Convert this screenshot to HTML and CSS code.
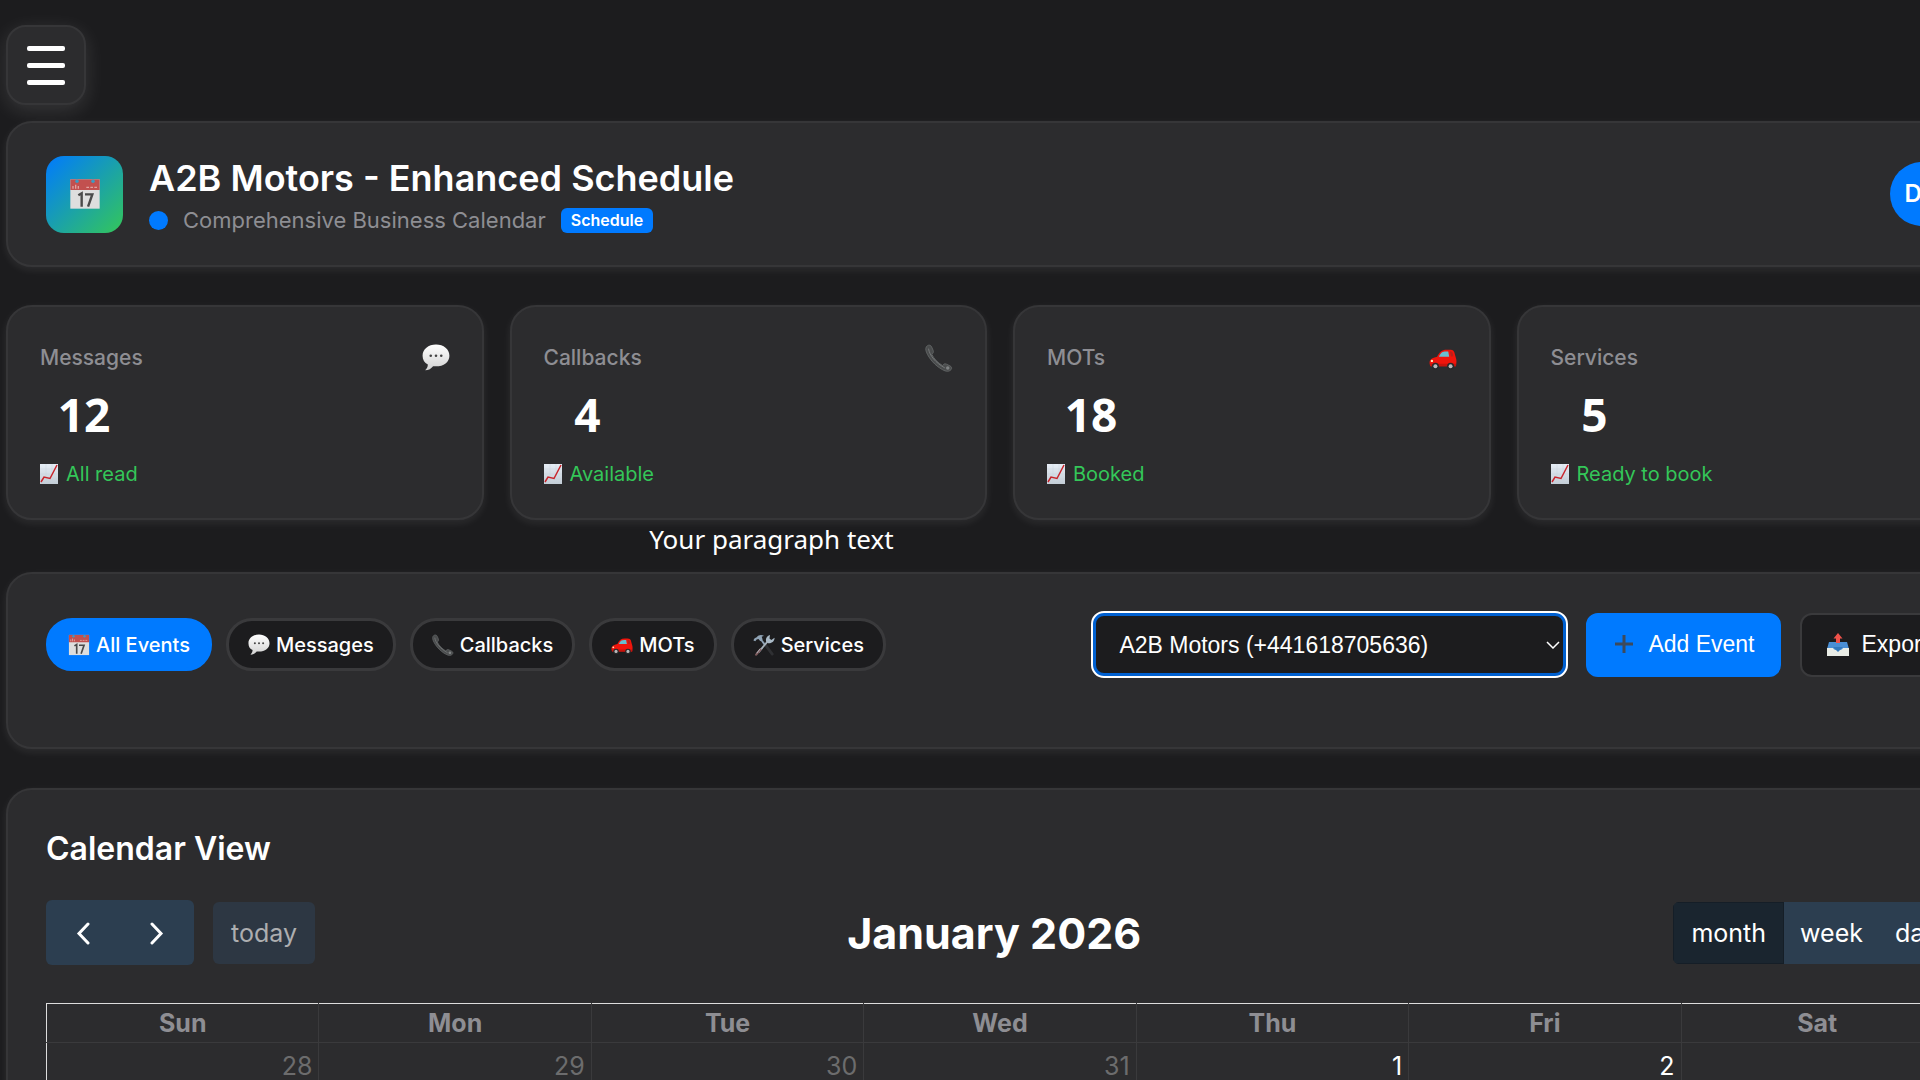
FILE: index.html
```html
<!DOCTYPE html>
<html lang="en">
<head>
    <meta charset="UTF-8">
    <meta name="viewport" content="width=device-width, initial-scale=1.0">
    <title>A2B Motors - Enhanced Schedule</title>
    <link rel="stylesheet" href="styles.css">
</head>
<body>

<!-- shared icons -->
<svg class="icon-defs" aria-hidden="true">
    <defs>
        <linearGradient id="paper" x1="0" y1="0" x2="0" y2="1">
            <stop offset="0" stop-color="#e6edf5"/>
            <stop offset="1" stop-color="#c3cdd6"/>
        </linearGradient>
        <linearGradient id="bubble" x1="0" y1="0" x2="0" y2="1">
            <stop offset="0" stop-color="#ffffff"/>
            <stop offset="1" stop-color="#d2d2d2"/>
        </linearGradient>
        <symbol id="icon-calendar" viewBox="0 0 24 24">
            <rect x="1" y="1" width="22" height="22" fill="#dedede"/>
            <rect x="1" y="1" width="22" height="8" fill="#c2504f"/>
            <path d="M3 8V6M5 8V5M7 8V6M13 7h2M16 7h2M19 7h2" stroke="#e3a3a0" stroke-width="1"/>
            <circle cx="6" cy="2.500" r="1.300" fill="#3a9bc4"/>
            <circle cx="18" cy="2.500" r="1.300" fill="#3a9bc4"/>
            <path d="M7 13l2.500-1.500v10M12 12.300h5.500l-3.200 9.200" fill="none" stroke="#4a4a4a" stroke-width="1.800"/>
        </symbol>
        <symbol id="icon-message" viewBox="0 0 24 24">
            <path d="M12 .5C5.500.5.500 4.500.5 10c0 3.500 1.500 6 4.500 7.500 0 2-.9 3.700-2.300 5 3 0 5.300-1.500 6.800-3.500 8 1 14-3 14-9C23.500 4.500 18.500.5 12 .5z" fill="url(#bubble)"/>
            <circle cx="7.500" cy="10" r="1.100" fill="#444"/>
            <circle cx="12" cy="10" r="1.100" fill="#444"/>
            <circle cx="16.500" cy="10" r="1.100" fill="#444"/>
        </symbol>
        <symbol id="icon-phone" viewBox="0 0 24 24">
            <path d="M2 1.500c1.500-1 3-.5 3.700 1l1.300 3c.5 1.500 0 2.500-1.200 3.300C7.500 12.500 11 16 15 18.500c1-1.500 2-1.800 3.500-1.200l3 1.500c1.500.8 1.700 2 .8 3.200-1.800 2-4.300 1.700-7.300 0C8.500 18.500 3.500 12.500 1.200 7 .3 4.500.5 2.500 2 1.500z" fill="#4a4c4d" stroke="#66696a" stroke-width=".7"/>
            <path d="M3 4c1 6 6 12 14 16.500" fill="none" stroke="#777a7b" stroke-width=".8"/>
            <circle cx="19.500" cy="20.500" r="1.500" fill="#808384"/>
        </symbol>
        <symbol id="icon-car" viewBox="0 0 24 24">
            <path d="M.5 16c0-2.500 2-4 6.500-5C9 7 11 5 15 5h3c2.500 0 3.800 1 4.200 4l1 3.500c.5 1.500.5 4-.2 6.500H1.500c-.8-1-1-2-1-3z" fill="#f0150c"/>
            <path d="M8.500 11C10 7.500 11.500 6.500 14.500 6.500h2l.8 4.500z" fill="#69bfd0"/>
            <path d="M18 6.500h1.200c1 .5 1.500 2 1.600 4l-2 .3z" fill="#b8201a"/>
            <path d="M.7 17h22.500v2H1.500z" fill="#c8130c"/>
            <circle cx="2.500" cy="14.500" r="1" fill="#ffe9b8"/>
            <circle cx="5.500" cy="19" r="3" fill="#28292b"/>
            <circle cx="5.500" cy="19" r="1.700" fill="#b8babb"/>
            <circle cx="18.500" cy="19" r="3" fill="#28292b"/>
            <circle cx="18.500" cy="19" r="1.700" fill="#b8babb"/>
        </symbol>
        <symbol id="icon-tools" viewBox="0 0 24 24">
            <path d="M12 10l9 12" stroke="#2f3033" stroke-width="3" stroke-linecap="round"/>
            <path d="M8 5l5 7" stroke="#8fa3b5" stroke-width="2"/>
            <path d="M.5 7c.5-2 2-3 3.500-3.500C6 1 9 .5 12 2l-2.500 1 1 3-2.500 2-2-2.500-2 .5L2.500 8z" fill="#8fa3b5"/>
            <path d="M16 8L6 20" stroke="#a5b1ba" stroke-width="2"/>
            <path d="M8 17l-4.500 5.500" stroke="#7e5a5c" stroke-width="2.500" stroke-linecap="round"/>
            <path d="M8 16l-4 5" stroke="#b9c3ca" stroke-width="1"/>
            <path d="M14.500 8.500c-1-3 0-6 4-7.500l-.5 4 2 1.500L23.500 4c.3 3.500-3 6.500-7 6z" fill="#a9b9c6"/>
        </symbol>
        <symbol id="icon-chart" viewBox="0 0 18 20">
            <path d="M0 0h18v20H0z" fill="url(#paper)"/>
            <path d="M0 5h18M0 10h18M0 15h18M6 0v20M12 0v20" stroke="#c6d1dc" stroke-width=".4"/>
            <path d="M1 18l3-5 6 1.500L17 1" fill="none" stroke="#c9242b" stroke-width="1.500"/>
        </symbol>
        <symbol id="icon-plus" viewBox="0 0 24 24">
            <path d="M12 2v18M3 11h18" stroke="#3d4a5c" stroke-width="3"/>
        </symbol>
        <symbol id="icon-export" viewBox="0 0 24 24">
            <path d="M3 9h18l2 7v7H1v-7z" fill="#4a8fd6"/>
            <path d="M1 15h6c1 3 9 3 10 0h6v8H1z" fill="#e9ece6"/>
            <path d="M12 0l4.500 5.500h-2.500V10h-4V5.500H7.500z" fill="#f0524a"/>
            <path d="M7 14h10l-5 5z" fill="#3379bd"/>
        </symbol>
    </defs>
</svg>

<div class="app">
    <button class="menu-btn" type="button" aria-label="Open menu">
        <span class="menu-bar"></span>
        <span class="menu-bar"></span>
        <span class="menu-bar"></span>
    </button>

    <header class="card header">
        <div class="brand">
            <div class="logo"><svg class="logo-icon"><use href="#icon-calendar"/></svg></div>
            <div class="brand-text">
                <h1>A2B Motors - Enhanced Schedule</h1>
                <div class="subtitle">
                    <span class="dot"></span>
                    <span>Comprehensive Business Calendar</span>
                    <span class="badge">Schedule</span>
                </div>
            </div>
        </div>
        <div class="avatar">DU</div>
    </header>

    <section class="stats">
        <div class="card stat">
            <div class="stat-top"><span>Messages</span><svg class="stat-icon"><use href="#icon-message"/></svg></div>
            <div class="stat-value">12</div>
            <div class="stat-note"><svg class="chart-icon"><use href="#icon-chart"/></svg>All read</div>
        </div>
        <div class="card stat">
            <div class="stat-top"><span>Callbacks</span><svg class="stat-icon"><use href="#icon-phone"/></svg></div>
            <div class="stat-value">4</div>
            <div class="stat-note"><svg class="chart-icon"><use href="#icon-chart"/></svg>Available</div>
        </div>
        <div class="card stat">
            <div class="stat-top"><span>MOTs</span><svg class="stat-icon"><use href="#icon-car"/></svg></div>
            <div class="stat-value">18</div>
            <div class="stat-note"><svg class="chart-icon"><use href="#icon-chart"/></svg>Booked</div>
        </div>
        <div class="card stat">
            <div class="stat-top"><span>Services</span><svg class="stat-icon"><use href="#icon-tools"/></svg></div>
            <div class="stat-value">5</div>
            <div class="stat-note"><svg class="chart-icon"><use href="#icon-chart"/></svg>Ready to book</div>
        </div>
    </section>

    <p class="caption">Your paragraph text</p>

    <section class="card toolbar">
        <div class="filters">
            <button class="filter active" type="button"><svg class="filter-icon"><use href="#icon-calendar"/></svg>All Events</button>
            <button class="filter" type="button"><svg class="filter-icon"><use href="#icon-message"/></svg>Messages</button>
            <button class="filter" type="button"><svg class="filter-icon"><use href="#icon-phone"/></svg>Callbacks</button>
            <button class="filter" type="button"><svg class="filter-icon"><use href="#icon-car"/></svg>MOTs</button>
            <button class="filter" type="button"><svg class="filter-icon"><use href="#icon-tools"/></svg>Services</button>
        </div>
        <div class="actions">
            <div class="select-wrap">
                <select class="select" aria-label="Business">
                    <option>A2B Motors (+441618705636)</option>
                </select>
                <svg class="select-arrow" viewBox="0 0 14 8"><path d="M1 1l6 6 6-6" fill="none" stroke="#fff" stroke-width="1.500"/></svg>
            </div>
            <button class="btn btn-primary" type="button"><svg class="btn-icon"><use href="#icon-plus"/></svg>Add Event</button>
            <button class="btn" type="button"><svg class="btn-icon"><use href="#icon-export"/></svg>Export</button>
        </div>
    </section>

    <section class="card calendar">
        <h2>Calendar View</h2>
        <div class="cal-toolbar">
            <div class="cal-left">
                <div class="cal-group">
                    <button class="cal-btn cal-arrow" type="button" aria-label="Previous"><svg class="arrow-icon" viewBox="0 0 16 24"><path d="M13 3L4 12.500l9 9.500" fill="none" stroke="#fff" stroke-width="3" stroke-linecap="round"/></svg></button>
                    <button class="cal-btn cal-arrow" type="button" aria-label="Next"><svg class="arrow-icon" viewBox="0 0 16 24"><path d="M3 3l9 9.500L3 22" fill="none" stroke="#fff" stroke-width="3" stroke-linecap="round"/></svg></button>
                </div>
                <button class="cal-btn cal-today" type="button" disabled>today</button>
            </div>
            <h3>January 2026</h3>
            <div class="cal-group">
                <button class="cal-btn cal-active" type="button">month</button>
                <button class="cal-btn" type="button">week</button>
                <button class="cal-btn" type="button">day</button>
            </div>
        </div>
        <table class="cal-grid">
            <thead>
                <tr><th>Sun</th><th>Mon</th><th>Tue</th><th>Wed</th><th>Thu</th><th>Fri</th><th>Sat</th></tr>
            </thead>
            <tbody>
                <tr>
                    <td class="other">28</td>
                    <td class="other">29</td>
                    <td class="other">30</td>
                    <td class="other">31</td>
                    <td>1</td>
                    <td>2</td>
                    <td>3</td>
                </tr>
            </tbody>
        </table>
    </section>
</div>

</body>
</html>
```
FILE: styles.css
```css
* {
    box-sizing: border-box;
}
body {
    margin: 0;
    height: 100vh;
    overflow: hidden;
    background-color: #1c1c1e;
    color: #fff;
    font-family: Inter, "Liberation Sans", sans-serif;
}
h1, h2, h3, p {
    margin: 0;
}
button, select {
    font-family: inherit;
    color: inherit;
    cursor: pointer;
}
svg {
    display: block;
    flex: none;
}
.icon-defs {
    position: absolute;
    width: 0;
    height: 0;
}
.app {
    width: calc(100% + 68px);
    margin-left: 6px;
    padding-top: 25px;
}
.card {
    background-color: #2c2c2e;
    border: 2px solid #363638;
    border-radius: 26px;
    box-shadow: 0 3px 8px rgba(255, 255, 255, 0.08);
}

/* menu + header */
.menu-btn {
    display: flex;
    flex-direction: column;
    align-items: center;
    justify-content: center;
    gap: 12px;
    width: 80px;
    height: 80px;
    margin-bottom: 16px;
    padding: 0;
    background-color: #2c2c2e;
    border: 2px solid #363638;
    border-radius: 20px;
    box-shadow: 0 5px 20px rgba(255, 255, 255, 0.12);
}
.menu-bar {
    width: 38px;
    height: 5px;
    border-radius: 2px;
    background-color: #fff;
}
.header {
    display: flex;
    align-items: center;
    justify-content: space-between;
    height: 146px;
    margin-bottom: 38px;
    padding: 0 38px;
}
.brand {
    display: flex;
    align-items: center;
    gap: 26px;
}
.brand-text {
    padding-top: 6px;
}
.logo {
    display: flex;
    align-items: center;
    justify-content: center;
    width: 77px;
    height: 77px;
    border-radius: 18px;
    background: linear-gradient(135deg, #007aff, #34c759);
}
.logo-icon {
    width: 32px;
    height: 32px;
}
h1 {
    font-size: 36px;
    line-height: 46px;
    font-weight: 600;
}
.subtitle {
    display: flex;
    align-items: center;
    gap: 15px;
    font-size: 22px;
    line-height: 38px;
    color: #8e8e93;
}
.dot {
    width: 19px;
    height: 19px;
    border-radius: 50%;
    background-color: #007aff;
}
.badge {
    padding: 0 10px;
    border-radius: 6px;
    background-color: #007aff;
    color: #fff;
    font-size: 16px;
    line-height: 25px;
    font-weight: 600;
}
.avatar {
    width: 64px;
    border-radius: 50%;
    background-color: #007aff;
    font-size: 24px;
    line-height: 64px;
    font-weight: 600;
    text-align: center;
}

/* stats */
.stats {
    display: grid;
    grid-template-columns: repeat(4, 1fr);
    gap: 26px;
}
.stat {
    height: 215px;
    padding: 32px;
}
.stat-top {
    display: flex;
    align-items: center;
    justify-content: space-between;
    font-size: 21px;
    line-height: 38px;
    font-weight: 500;
    color: #8e8e93;
}
.stat-icon {
    width: 28px;
    height: 28px;
}
.stat-value {
    width: 88px;
    margin: 7px 0 11px;
    font-family: "Noto Sans", sans-serif;
    font-size: 46px;
    line-height: 60px;
    font-weight: 700;
    text-align: center;
}
.stat-note {
    display: flex;
    align-items: center;
    gap: 8px;
    font-size: 20px;
    line-height: 38px;
    color: #34c759;
}
.chart-icon {
    width: 18px;
    height: 20px;
}
.caption {
    width: 77%;
    padding-bottom: 14px;
    font-family: "Noto Sans", sans-serif;
    font-size: 26px;
    line-height: 38px;
    text-align: center;
}

/* toolbar */
.toolbar {
    display: flex;
    align-items: flex-start;
    justify-content: space-between;
    height: 177px;
    margin-bottom: 39px;
    padding: 38px;
}
.filters {
    display: flex;
    gap: 14px;
    padding-top: 6px;
}
.filter {
    display: flex;
    align-items: center;
    gap: 6px;
    height: 53px;
    padding: 0 19px;
    background-color: #1c1c1e;
    border: 3px solid #3a3a3c;
    border-radius: 26px;
    font-size: 20px;
    font-weight: 500;
}
.filter.active {
    background-color: #007aff;
    border-color: #007aff;
}
.filter-icon {
    width: 22px;
    height: 22px;
}
.actions {
    display: flex;
    align-items: center;
    gap: 19px;
    font-family: "Liberation Sans", Arial, sans-serif;
}
.select-wrap {
    position: relative;
}
.select {
    appearance: none;
    width: 475px;
    height: 65px;
    padding: 0 23px;
    background-color: #1c1c1e;
    border: 4px solid #0060d0;
    border-radius: 12px;
    outline: 2px solid #fff;
    outline-offset: -1px;
    font-size: 23px;
}
.select-arrow {
    position: absolute;
    right: 7px;
    top: 29px;
    width: 14px;
    height: 8px;
    pointer-events: none;
}
.btn {
    display: flex;
    align-items: center;
    gap: 12px;
    height: 64px;
    padding: 0 24px;
    background-color: #1c1c1e;
    border: 2px solid #3a3a3c;
    border-radius: 12px;
    font-size: 23px;
}
.btn-primary {
    background-color: #007aff;
    border-color: #007aff;
}
.btn-icon {
    width: 24px;
    height: 24px;
}

/* calendar */
.calendar {
    padding: 38px;
}
h2 {
    font-size: 32px;
    line-height: 42px;
    font-weight: 600;
}
.cal-toolbar {
    display: flex;
    align-items: center;
    justify-content: space-between;
    margin: 30px 0 38px;
}
.cal-left {
    display: flex;
    align-items: center;
    gap: 19px;
}
.cal-group {
    display: flex;
    overflow: hidden;
    border-radius: 6px;
}
.cal-btn {
    height: 62px;
    padding: 0 16px;
    background-color: #2c3e50;
    border: 0;
    font-size: 25px;
}
.cal-arrow {
    display: flex;
    align-items: center;
    justify-content: center;
    width: 74px;
    height: 65px;
}
.arrow-icon {
    width: 16px;
    height: 24px;
}
.cal-today {
    padding: 0 18px;
    border-radius: 6px;
    background-color: #2d3743;
    color: #adaeb0;
}
.cal-active {
    padding: 0 17px;
    background-color: #1a252f;
    border: 1px solid #151e27;
}
h3 {
    font-size: 43px;
    line-height: 54px;
    font-weight: 700;
}
.cal-grid {
    width: 100%;
    table-layout: fixed;
    border-collapse: collapse;
    border: 1px solid #ddd;
    font-size: 25px;
}
.cal-grid th {
    height: 39px;
    padding: 0;
    border: 1px solid #3a3a3c;
    border-top-color: #ddd;
    color: #8e8e93;
    font-weight: 700;
}
.cal-grid td {
    height: 220px;
    padding: 8px 6px;
    border: 1px solid #3a3a3c;
    line-height: 30px;
    text-align: right;
    vertical-align: top;
}
.cal-grid th:first-child, .cal-grid td:first-child {
    border-left-color: #ddd;
}
.cal-grid .other {
    color: #6c6c6d;
}
```
